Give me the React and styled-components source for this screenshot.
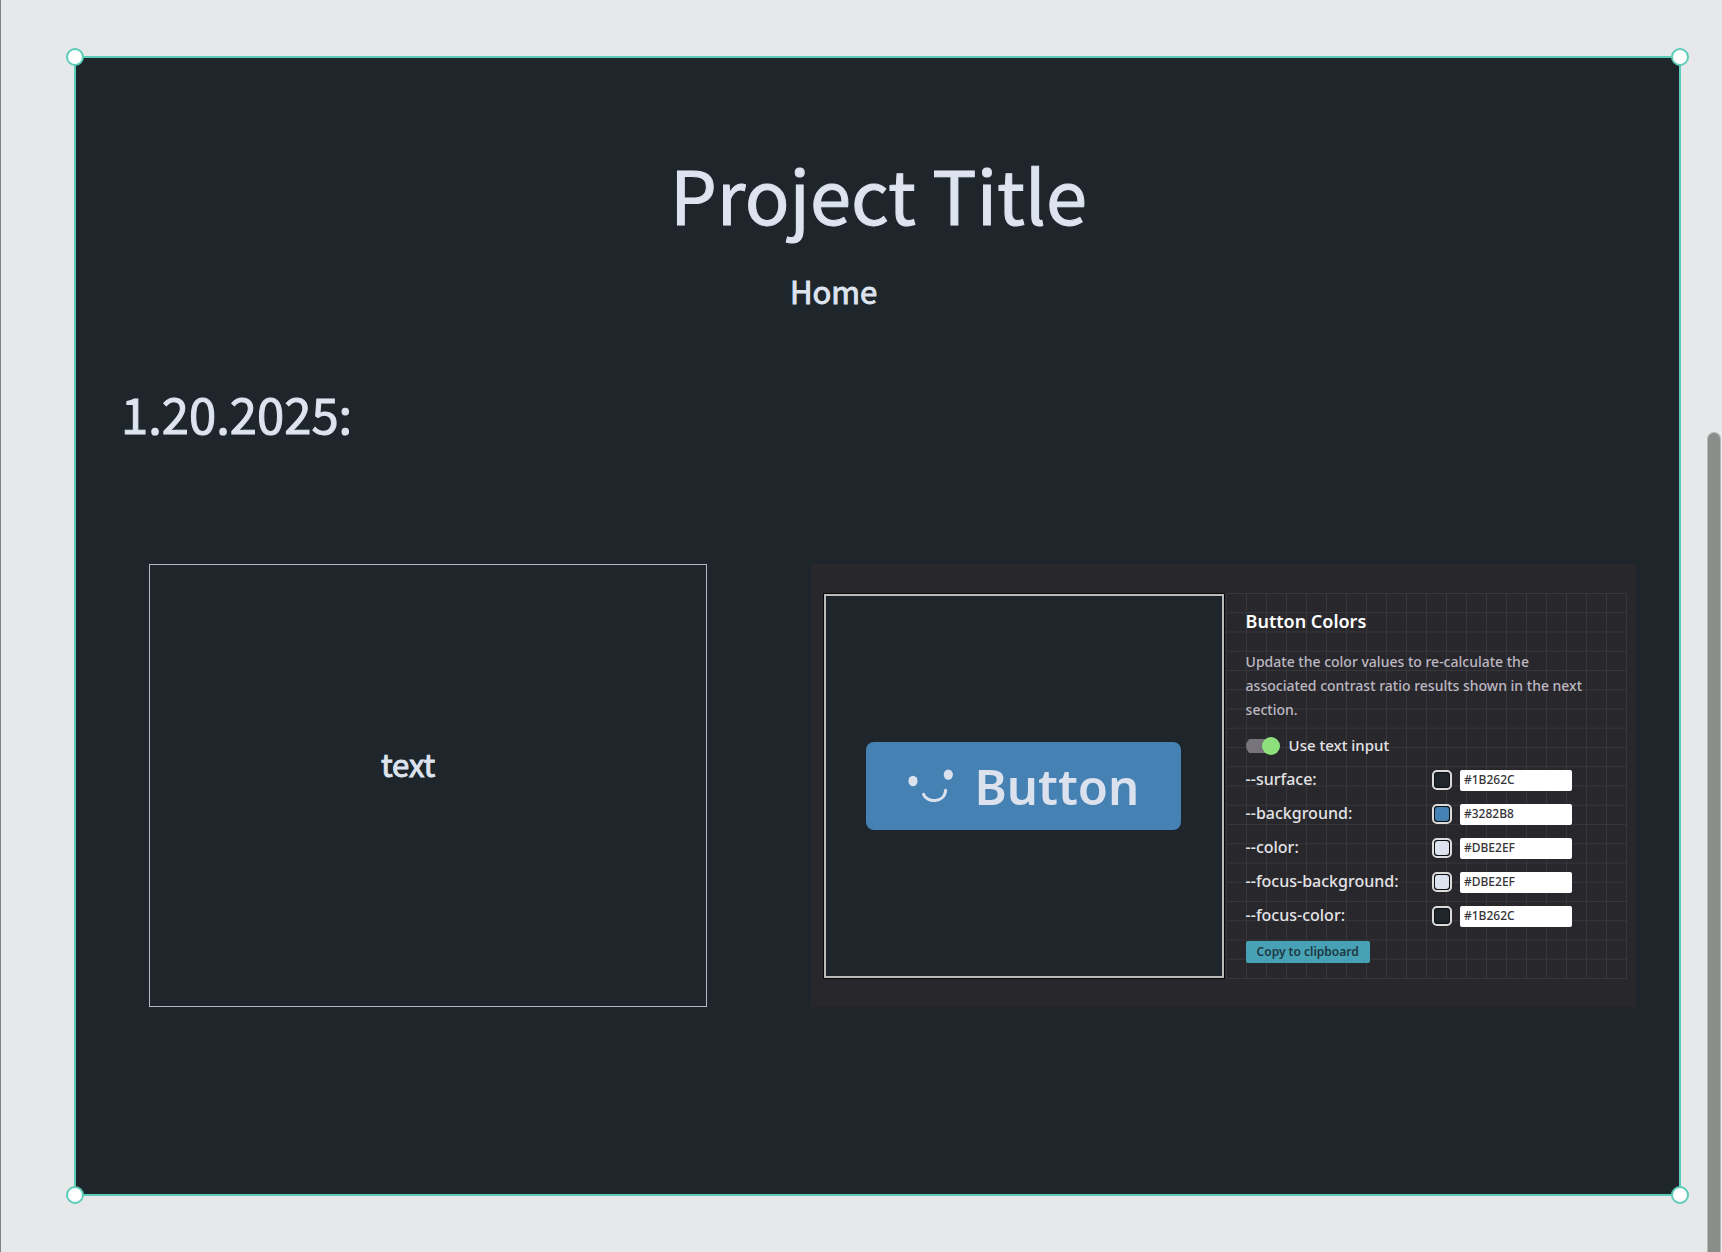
import React, { useState } from "react";
import styled, { createGlobalStyle, css } from "styled-components";

const GlobalStyle = createGlobalStyle`
  *, *::before, *::after { box-sizing: border-box; }
  body {
    margin: 0;
    background: #e7e8ea;
    font-family: "Noto Sans CJK JP", "Noto Sans", sans-serif;
    color: #dde3ef;
  }
  h1, h2, h3, p { margin: 0; }
`;

const boardText = css`
  font-weight: 400;
  -webkit-text-stroke: 1px currentColor;
`;

const Workspace = styled.div`
  display: flex;
  gap: 26px;
  min-height: 100vh;
  padding: 0 1px 0 73px;
  border-left: 1px solid #808184;
`;

const Artboard = styled.main`
  position: relative;
  flex: 1;
  min-width: 0;
  margin: 56px 0;
  padding: 90px 43px 185px 45px;
  background: #1e262c;
  border: 2px solid #5bccb7;
`;

const Handle = styled.span`
  position: absolute;
  width: 18px;
  height: 18px;
  border: 2px solid #5bccb7;
  border-radius: 50%;
  background: #fff;
  ${(p) => p.$y}: -10px;
  ${(p) => p.$x}: -10px;
`;

const ScrollTrack = styled.div`
  display: flex;
  width: 14px;
  padding-top: 432px;
`;

const ScrollThumb = styled.div`
  flex: 1;
  border: 1px solid #b9bab9;
  border-bottom: 0;
  border-radius: 7px 7px 0 0;
  background: #8b8d8b;
`;

const Title = styled.h1`
  ${boardText}
  font-size: 74px;
  line-height: 90px;
  text-align: center;
`;

const Nav = styled.nav`
  display: flex;
  justify-content: center;
  margin-top: 33px;
  padding-right: 90px;
`;

const NavLink = styled.a`
  ${boardText}
  font-size: 31px;
  line-height: 40px;
  color: inherit;
  text-decoration: none;
`;

const DateHeading = styled.h2`
  ${boardText}
  margin-top: 72px;
  font-size: 49px;
  line-height: 60px;
`;

const Entry = styled.section`
  display: grid;
  grid-template-columns: 559fr 826fr;
  gap: 104px;
  margin-top: 121px;
  padding-left: 28px;
`;

const TextCard = styled.div`
  display: flex;
  align-items: center;
  justify-content: center;
  padding: 0 40px 44px 0;
  border: 1px solid #b4bac4;
`;

const CardText = styled.p`
  ${boardText}
  font-size: 31px;
  line-height: 40px;
`;

const Tool = styled.div`
  display: grid;
  grid-template-columns: 400fr 402fr;
  gap: 2px;
  padding: 29px 9px 28px 13px;
  background: #28272c;
  font-family: "Noto Sans", sans-serif;
  font-weight: 500;
`;

const Preview = styled.div`
  display: flex;
  align-items: center;
  justify-content: center;
  margin: 1px 0;
  border: 2px solid #b9bbb9;
  box-shadow: 0 0 0 1px #08090a;
  background: #1e262c;
`;

const SampleButton = styled.button`
  display: flex;
  align-items: center;
  gap: 20px;
  height: 88px;
  padding: 0 42px;
  border: 0;
  border-radius: 8px;
  background: #4681b4;
  color: #dce1ee;
  font-family: inherit;
  font-size: 49px;
  font-weight: 600;
  line-height: 56px;
`;

const Settings = styled.form`
  display: flex;
  flex-direction: column;
  align-items: flex-start;
  padding: 16px 20px 15px 20px;
  border-right: 1px solid #37363b;
  border-bottom: 1px solid #37363b;
  background-image:
    linear-gradient(to right, #37363b 1px, transparent 1px),
    linear-gradient(to bottom, #37363b 1px, transparent 1px);
  background-size: 5% 5%;
`;

const SettingsTitle = styled.h3`
  font-size: 18px;
  line-height: 24px;
  font-weight: 600;
  color: #fff;
`;

const Description = styled.p`
  margin-top: 17px;
  font-size: 14px;
  line-height: 24px;
  color: #bdb8c1;
`;

const ToggleRow = styled.label`
  display: flex;
  align-items: center;
  gap: 9px;
  height: 24px;
  margin-top: 12px;
  font-size: 15px;
  line-height: 22px;
  color: #e4e3e6;
`;

const ToggleText = styled.span`
  padding-bottom: 2px;
`;

const Toggle = styled.input`
  appearance: none;
  display: flex;
  align-items: center;
  width: 34px;
  height: 18px;
  margin: 0;
  border-radius: 9px;
  background: linear-gradient(#77737b, #77737b) left center / 28px 14px no-repeat;
  &::before {
    content: "";
    width: 18px;
    height: 18px;
    border-radius: 50%;
    background: #8ee07c;
    margin-left: ${(p) => (p.checked ? "auto" : "0")};
  }
`;

const Rows = styled.div`
  display: grid;
  align-self: stretch;
  gap: 13px;
  margin-top: 12px;
  padding-right: 34px;
`;

const Row = styled.div`
  display: grid;
  grid-template-columns: 1fr 20px 112px;
  align-items: start;
  column-gap: 8px;
  height: 21px;
`;

const RowLabel = styled.label`
  font-size: 16px;
  line-height: 18px;
  color: #e4e3e6;
`;

const Swatch = styled.input`
  appearance: none;
  width: 20px;
  height: 20px;
  padding: 1px;
  border: 2px solid #dcdcdc;
  border-radius: 5px;
  background: #0d1013;
  &::-webkit-color-swatch-wrapper { padding: 0; }
  &::-webkit-color-swatch { border: 0; border-radius: 3px; }
`;

const HexInput = styled.input`
  width: 100%;
  height: 21px;
  padding: 0 4px 2px;
  border: 0;
  border-radius: 2px;
  background: #fff;
  color: #353337;
  font-family: inherit;
  font-size: 12px;
  font-weight: 500;
`;

const CopyButton = styled.button`
  height: 22px;
  margin-top: 14px;
  padding: 0 11px;
  border: 0;
  border-radius: 2px;
  background: #48a2b5;
  color: #1d3740;
  font-family: inherit;
  font-size: 12px;
  font-weight: 600;
  line-height: 20px;
`;

const Face = () => (
  <svg width="46" height="34" viewBox="0 0 46 34" aria-hidden="true">
    <ellipse cx="5" cy="12" rx="4.6" ry="5.2" fill="#dce1ee" />
    <ellipse cx="40.3" cy="5.6" rx="4.6" ry="5.2" fill="#dce1ee" />
    <path
      d="M15.5 25.3C18.5 34 36.5 34.5 37.6 21.3"
      fill="none"
      stroke="#dce1ee"
      strokeWidth="3"
      strokeLinecap="round"
    />
  </svg>
);

const COLORS = [
  { name: "surface", value: "#1B262C", swatch: "#1e262c" },
  { name: "background", value: "#3282B8", swatch: "#4681b4" },
  { name: "color", value: "#DBE2EF", swatch: "#dce2ee" },
  { name: "focus-background", value: "#DBE2EF", swatch: "#dce2ee" },
  { name: "focus-color", value: "#1B262C", swatch: "#1e262c" },
];

export default function App() {
  const [textInput, setTextInput] = useState(true);
  return (
    <>
      <GlobalStyle />
      <Workspace>
        <Artboard>
          <Title>Project Title</Title>
          <Nav>
            <NavLink href="#home">Home</NavLink>
          </Nav>
          <DateHeading>1.20.2025:</DateHeading>
          <Entry>
            <TextCard>
              <CardText>text</CardText>
            </TextCard>
            <Tool>
              <Preview>
                <SampleButton type="button">
                  <Face />
                  Button
                </SampleButton>
              </Preview>
              <Settings onSubmit={(e) => e.preventDefault()}>
                <SettingsTitle>Button Colors</SettingsTitle>
                <Description>
                  Update the color values to re-calculate the
                  <br />
                  associated contrast ratio results shown in the next section.
                </Description>
                <ToggleRow>
                  <Toggle
                    type="checkbox"
                    checked={textInput}
                    onChange={(e) => setTextInput(e.target.checked)}
                  />
                  <ToggleText>Use text input</ToggleText>
                </ToggleRow>
                <Rows>
                  {COLORS.map((c) => (
                    <Row key={c.name}>
                      <RowLabel htmlFor={c.name}>--{c.name}:</RowLabel>
                      <Swatch
                        type="color"
                        aria-label={c.name}
                        defaultValue={c.swatch}
                      />
                      <HexInput id={c.name} type="text" defaultValue={c.value} />
                    </Row>
                  ))}
                </Rows>
                <CopyButton type="button">Copy to clipboard</CopyButton>
              </Settings>
            </Tool>
          </Entry>
          <Handle $y="top" $x="left" />
          <Handle $y="top" $x="right" />
          <Handle $y="bottom" $x="left" />
          <Handle $y="bottom" $x="right" />
        </Artboard>
        <ScrollTrack>
          <ScrollThumb />
        </ScrollTrack>
      </Workspace>
    </>
  );
}
